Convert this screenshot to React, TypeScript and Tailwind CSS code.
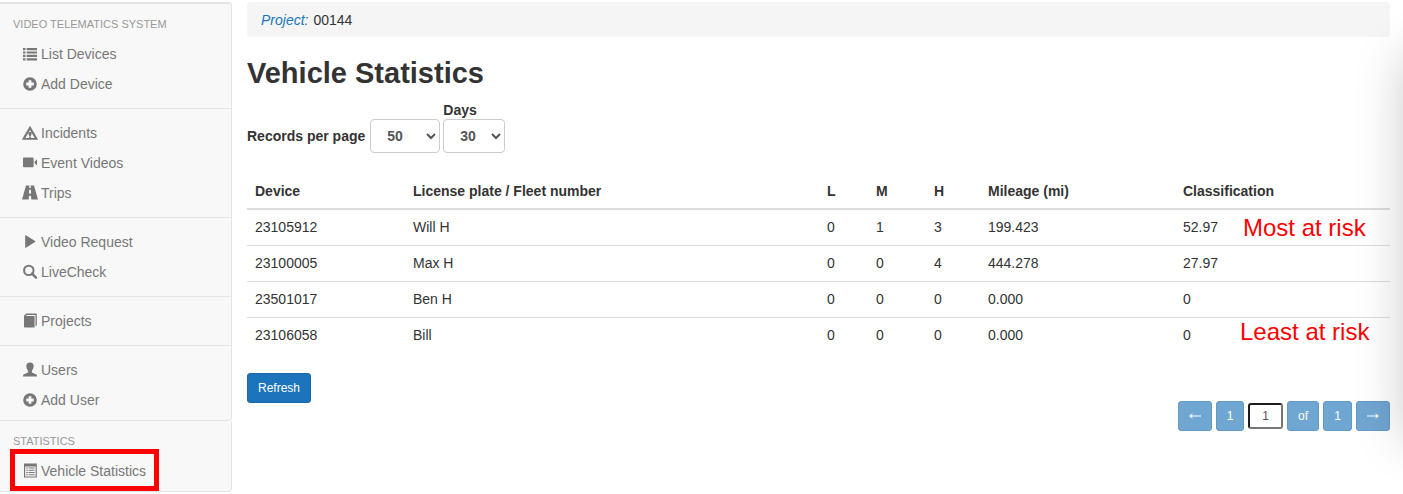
import { useState } from "react";
import type { ReactNode } from "react";

type IconName =
  | "list"
  | "plus"
  | "warning"
  | "video"
  | "road"
  | "play"
  | "search"
  | "book"
  | "user"
  | "listAlt";

interface NavItem {
  label: string;
  icon: IconName;
  highlighted?: boolean;
}

interface VehicleRow {
  device: string;
  plate: string;
  low: number;
  medium: number;
  high: number;
  mileage: string;
  classification: string;
  note?: string;
  noteClass?: string;
}

const SYSTEM_GROUPS: NavItem[][] = [
  [
    { label: "List Devices", icon: "list" },
    { label: "Add Device", icon: "plus" },
  ],
  [
    { label: "Incidents", icon: "warning" },
    { label: "Event Videos", icon: "video" },
    { label: "Trips", icon: "road" },
  ],
  [
    { label: "Video Request", icon: "play" },
    { label: "LiveCheck", icon: "search" },
  ],
  [{ label: "Projects", icon: "book" }],
  [
    { label: "Users", icon: "user" },
    { label: "Add User", icon: "plus" },
  ],
];

const STATISTICS_GROUPS: NavItem[][] = [
  [{ label: "Vehicle Statistics", icon: "listAlt", highlighted: true }],
];

const VEHICLES: VehicleRow[] = [
  {
    device: "23105912",
    plate: "Will H",
    low: 0,
    medium: 1,
    high: 3,
    mileage: "199.423",
    classification: "52.97",
    note: "Most at risk",
    noteClass: "top-1 left-[68px]",
  },
  { device: "23100005", plate: "Max H", low: 0, medium: 0, high: 4, mileage: "444.278", classification: "27.97" },
  { device: "23501017", plate: "Ben H", low: 0, medium: 0, high: 0, mileage: "0.000", classification: "0" },
  {
    device: "23106058",
    plate: "Bill",
    low: 0,
    medium: 0,
    high: 0,
    mileage: "0.000",
    classification: "0",
    note: "Least at risk",
    noteClass: "top-0 left-[65px]",
  },
];

const ICONS: Record<IconName, ReactNode> = {
  list: (
    <path d="M0 1h2.5v2.2H0zM3.7 1H14v2.2H3.7zM0 4.4h2.5v2.2H0zM3.7 4.4H14v2.2H3.7zM0 7.8h2.5V10H0zM3.7 7.8H14V10H3.7zM0 11.2h2.5v2.2H0zM3.7 11.2H14v2.2H3.7z" />
  ),
  plus: (
    <path
      fillRule="evenodd"
      d="M7 .2a6.8 6.8 0 1 0 0 13.6A6.8 6.8 0 0 0 7 .2zM5.6 3.2h2.8v2.4h2.4v2.8H8.4v2.4H5.6V8.4H3.2V5.6h2.4z"
    />
  ),
  warning: (
    <>
      <path fillRule="evenodd" d="M7-.2 15.200 13.800H-1.200zM7 4 2.400 11.900h9.200z" />
      <path d="M5.400 6h3.200v1.800L7.900 10H6.100l-.7-2.200zM6 10.400h2v1.500H6z" />
    </>
  ),
  video: (
    <path d="M1 1.500h8.600a1 1 0 0 1 1 1v7.800a1 1 0 0 1-1 1H1a1 1 0 0 1-1-1V2.500a1 1 0 0 1 1-1zM11.400 6 14 3.200v6.400l-2.600-2.800z" />
  ),
  road: (
    <path
      fillRule="evenodd"
      d="M3-.5h3.300l-.1 2.500h1.600L7.700-.5H11l4 14H8.300L8 9.700H6l-.3 3.800H-1zM6.100 3.700 5.900 7.500h2.200l-.2-3.800z"
    />
  ),
  play: <path d="M2.2.6v11.8a.4.4 0 0 0 .6.3l9.300-5.800a.5.5 0 0 0 0-.8L2.800.3a.4.4 0 0 0-.6.3z" />,
  search: (
    <>
      <circle cx="5.800" cy="5.400" r="4.700" fill="none" stroke="currentColor" strokeWidth="2" />
      <path d="m9 8.600 4 4" stroke="currentColor" strokeWidth="2.400" strokeLinecap="round" />
    </>
  ),
  book: (
    <path d="M1 1.700 3.200-.5H13a.8.8 0 0 1 .8.8v11l-1.300 1.100V.9H4L2.800 2.100h8.800v11.400H1.800a.8.8 0 0 1-.8-.8z" />
  ),
  user: (
    <path d="M7-.4c2.300 0 3.700 1.400 3.700 3.500 0 1.800-.7 3.400-1.800 4.600v1.200c.1.600.6.800 1.200 1.100l2.800 1.200c.7.300 1.100.8 1.100 1.500v.9H0v-.9c0-.7.4-1.200 1.100-1.500L3.900 10c.6-.3 1.100-.5 1.200-1.100V7.700C4 6.500 3.300 4.900 3.300 3.100 3.300 1 4.700-.4 7-.4z" />
  ),
  listAlt: (
    <>
      <path fillRule="evenodd" d="M1-.4h12.800v14H1zM2.200 2.400v10h10.400v-10z" />
      <path d="M3.200 3.600h1.600v1H3.200zM5.600 3.600h6v1h-6zM3.200 5.800h1.600v1H3.200zM5.600 5.800h6v1h-6zM3.200 8h1.600v1H3.200zM5.600 8h6v1h-6zM3.200 10.200h1.600v1H3.200zM5.600 10.200h6v1h-6z" />
    </>
  ),
};

function Icon({ name }: { name: IconName }) {
  return (
    <svg viewBox="0 0 14 14" className="size-3.5 shrink-0 overflow-visible" fill="currentColor" aria-hidden="true">
      {ICONS[name]}
    </svg>
  );
}

function NavPanel({ title, groups }: { title: string; groups: NavItem[][] }) {
  return (
    <section className="rounded-br border-r border-b border-[#e4e4e4] bg-[#f8f8f8] py-[5px]">
      <h2 className="pl-[13px] text-[11px] leading-[30px] text-[#999]">{title}</h2>
      {groups.map((group, i) => (
        <ul
          key={group[0].label}
          className={i > 0 ? "mt-[9px] border-t border-[#e4e4e4] pt-[9px]" : ""}
        >
          {group.map((item) => (
            <li key={item.label} className="relative h-[30px]">
              <a href="#" className="flex h-full items-center gap-1 pl-[23px] text-[#777] hover:text-[#333]">
                <Icon name={item.icon} />
                {item.label}
              </a>
              {item.highlighted ? (
                <span className="pointer-events-none absolute -top-[7px] left-[10px] h-[42px] w-[149px] border-5 border-[#fe0000]" />
              ) : null}
            </li>
          ))}
        </ul>
      ))}
    </section>
  );
}

function VehicleTable({ rows }: { rows: VehicleRow[] }) {
  return (
    <table className="w-full table-fixed border-collapse text-left">
      <thead>
        <tr className="border-b-2 border-[#ddd] [&>th]:px-2 [&>th]:pt-2 [&>th]:pb-[7px]">
          <th className="w-[158px]">Device</th>
          <th>License plate / Fleet number</th>
          <th className="w-[49px]">L</th>
          <th className="w-[58px]">M</th>
          <th className="w-[54px]">H</th>
          <th className="w-[195px]">Mileage (mi)</th>
          <th className="w-[215px]">Classification</th>
        </tr>
      </thead>
      <tbody>
        {rows.map((row) => (
          <tr key={row.device} className="border-b border-[#ddd] last:border-b-0 [&>td]:px-2 [&>td]:pt-[7px] [&>td]:pb-2">
            <td>{row.device}</td>
            <td>{row.plate}</td>
            <td>{row.low}</td>
            <td>{row.medium}</td>
            <td>{row.high}</td>
            <td>{row.mileage}</td>
            <td className="relative">
              {row.classification}
              {row.note ? (
                <span className={`absolute text-2xl leading-7 whitespace-nowrap text-[#fe0000] ${row.noteClass}`}>
                  {row.note}
                </span>
              ) : null}
            </td>
          </tr>
        ))}
      </tbody>
    </table>
  );
}

const PAGER_BUTTON = "h-[30px] rounded-[3px] border border-[#6499c4] bg-[#70a6d2] text-xs text-white";

function Arrow({ direction }: { direction: "left" | "right" }) {
  return (
    <svg
      viewBox="0 0 12 8"
      className={direction === "left" ? "mx-auto h-2 w-3" : "mx-auto h-2 w-3 rotate-180"}
      fill="currentColor"
      aria-hidden="true"
    >
      <path d="M0 4 3.600 1.200 3 3.500h9v1H3l.6 2.300z" />
    </svg>
  );
}

function Pager() {
  const [page, setPage] = useState("1");

  return (
    <nav aria-label="Pages" className="mt-7 flex items-center gap-1">
      <button type="button" aria-label="Previous page" className={`${PAGER_BUTTON} w-[34px]`}>
        <Arrow direction="left" />
      </button>
      <button type="button" className={`${PAGER_BUTTON} w-7`}>
        1
      </button>
      <input
        aria-label="Page number"
        value={page}
        onChange={(e) => setPage(e.target.value)}
        className="h-[26px] w-[35px] rounded-[3px] border-2 border-t-[#1c1c1c] border-r-[#767676] border-b-[#767676] border-l-[#1c1c1c] bg-white text-center text-xs text-[#555]"
      />
      <button type="button" className={`${PAGER_BUTTON} w-8`}>
        of
      </button>
      <button type="button" className={`${PAGER_BUTTON} w-[29px]`}>
        1
      </button>
      <button type="button" aria-label="Next page" className={`${PAGER_BUTTON} w-[34px]`}>
        <Arrow direction="right" />
      </button>
    </nav>
  );
}

export default function App() {
  const [perPage, setPerPage] = useState("50");
  const [days, setDays] = useState("30");

  return (
    <div className="relative flex min-h-screen overflow-hidden bg-white font-['Helvetica_Neue','Liberation_Sans',sans-serif] text-sm text-[#333]">
      <aside className="w-[232px] shrink-0 pt-0.5">
        <div className="rounded-tr border-t-2 border-[#e4e4e4]">
          <NavPanel title="VIDEO TELEMATICS SYSTEM" groups={SYSTEM_GROUPS} />
          <NavPanel title="STATISTICS" groups={STATISTICS_GROUPS} />
        </div>
      </aside>

      <main className="min-w-0 flex-1 pt-0.5 pr-[13px] pl-[15px]">
        <div className="flex h-[35px] items-center gap-[5px] rounded bg-[#f5f5f5] px-3.5">
          <a href="#" className="text-[#1c75bc] italic">
            Project:
          </a>
          <span>00144</span>
        </div>

        <h1 className="mt-5 text-[29px] leading-8 font-bold">Vehicle Statistics</h1>

        <div className="mt-3 flex items-end gap-[3px] font-bold">
          <div className="flex items-center gap-[5px]">
            <label htmlFor="per-page">Records per page</label>
            <select
              id="per-page"
              value={perPage}
              onChange={(e) => setPerPage(e.target.value)}
              className="h-[34px] w-[70px] rounded border border-[#ccc] bg-white pl-3 text-[#555]"
            >
              <option>25</option>
              <option>50</option>
              <option>100</option>
            </select>
          </div>
          <div className="flex flex-col">
            <label htmlFor="days" className="leading-[18px]">
              Days
            </label>
            <select
              id="days"
              value={days}
              onChange={(e) => setDays(e.target.value)}
              className="h-[34px] w-[62px] rounded border border-[#ccc] bg-white pl-3 text-[#555]"
            >
              <option>7</option>
              <option>30</option>
              <option>90</option>
            </select>
          </div>
        </div>

        <div className="mt-5">
          <VehicleTable rows={VEHICLES} />
        </div>

        <div className="mt-5 flex items-start justify-between">
          <button type="button" className="h-[30px] rounded-[3px] border border-[#1968a7] bg-[#1c75bc] px-2.5 text-xs text-white">
            Refresh
          </button>
          <Pager />
        </div>
      </main>

      <div className="pointer-events-none absolute top-[55px] left-full h-[385px] w-20 shadow-[0_0_50px_rgba(0,0,0,0.2)]" />
    </div>
  );
}
